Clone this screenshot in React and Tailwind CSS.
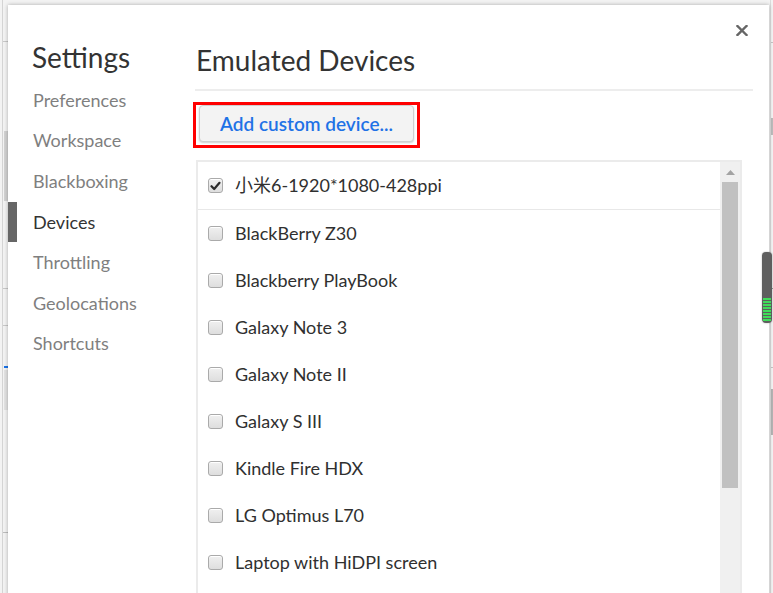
import React from 'react';

const navItems = ['Preferences', 'Workspace', 'Blackboxing', 'Devices', 'Throttling', 'Geolocations', 'Shortcuts'];

const devices = [
  { name: '小米6-1920*1080-428ppi', checked: true },
  { name: 'BlackBerry Z30' },
  { name: 'Blackberry PlayBook' },
  { name: 'Galaxy Note 3' },
  { name: 'Galaxy Note II' },
  { name: 'Galaxy S III' },
  { name: 'Kindle Fire HDX' },
  { name: 'LG Optimus L70' },
  { name: 'Laptop with HiDPI screen' },
];

// little checkbox like the devtools one
const Checkbox = ({ checked }) => (
  <span className="w-[15px] h-[15px] shrink-0 rounded-[3px] border border-[#aaaaaa] bg-gradient-to-b from-[#f0f0f0] to-[#dedede] shadow-[inset_0_1px_0_#fff] flex items-center justify-center">
    {checked && (
      <svg width="11" height="10" viewBox="0 0 11 10">
        <path d="M1.5 5.2 L4.2 8 L9.5 1.8" fill="none" stroke="#2b2b2b" strokeWidth="2.2" strokeLinecap="round" strokeLinejoin="round" />
      </svg>
    )}
  </span>
);

const App = () => {
  return (
    <div className="relative w-[773px] h-[593px] overflow-hidden bg-[#f3f3f3] font-['Lato','Noto_Sans_CJK_SC',sans-serif]">
      {/* page behind the dialog */}
      <div className="flex h-full justify-between">
        <div className="w-[8px] h-full ml-[2px] border-l border-[#d4d4d4] flex flex-col">
          <div className="mt-[41px] h-px bg-[#c8c8c8]" />
          <div className="mt-[89px] h-[70px] ml-px bg-[#d2d2d2]" />
          <div className="mt-[87px] h-px bg-[#c8c8c8]" />
          <div className="mt-[36px] h-px bg-[#c8c8c8]" />
          <div className="mt-[40px] h-[2px] ml-px bg-[#1a73e8]" />
          <div className="mt-[2px] h-[40px] ml-px bg-[#e2e2e2]" />
          <div className="mt-[122px] h-px bg-[#bdbdbd]" />
        </div>
        <div className="w-[3px] h-full border-l border-[#dcdcdc] flex flex-col">
          <div className="mt-[42px] h-px bg-[#c4c4c4]" />
          <div className="mt-[75px] h-[17px] bg-[#bcbcbc]" />
          <div className="mt-[153px] h-px bg-[#9a9a9a]" />
          <div className="mt-[78px] h-px bg-[#c4c4c4]" />
          <div className="mt-[21px] h-[46px] bg-[#b4b4b4]" />
        </div>
      </div>

      {/* dialog */}
      <div className="absolute left-[8px] top-[5px] w-[761px] h-[620px] bg-white shadow-[0_0_4px_rgba(0,0,0,0.3)] flex">
        <aside className="w-[187px] shrink-0 flex flex-col">
          <div className="h-[75px] pt-[36px] pl-[24px] text-[28px] leading-[32px] text-[#333]">Settings</div>
          {navItems.map((item) => (
            <div
              key={item}
              className={
                item === 'Devices'
                  ? 'h-[40.6px] flex items-center border-l-[9px] border-[#666] pl-[16px] text-[18px] text-[#333]'
                  : 'h-[40.6px] flex items-center pl-[25px] text-[18px] text-[#7f7f7f]'
              }
            >
              {item}
            </div>
          ))}
        </aside>

        <main className="flex-1 pr-[16px] flex flex-col min-w-0">
          <div className="pt-[39px] pl-[1px] text-[28px] leading-[32px] text-[#333]">Emulated Devices</div>
          <div className="mt-[13px] h-[2px] bg-[#ededed]" />

          <div className="mt-[11px] ml-[-2px] w-[227px] h-[46px] border-[3px] border-[#ff0000] px-[3px]">
            <button className="w-full h-[37px] rounded-[4px] border border-[#cfcfcf] bg-[#f3f3f3] shadow-[0_1px_2px_rgba(0,0,0,0.2)] text-[19px] font-semibold text-[#1f72e6] leading-none">
              Add custom device...
            </button>
          </div>

          <div className="mt-[12px] ml-[1px] w-[546px] flex-1 border-2 border-[#ebebeb] flex min-h-0">
            <div className="flex-1 flex flex-col overflow-hidden">
              {devices.map((d, i) => (
                <div
                  key={d.name}
                  className={
                    i === 0
                      ? 'h-[48px] shrink-0 flex items-center gap-[12px] pl-[10px] border-b border-[#e8e8e8] text-[18px] text-[#303030]'
                      : 'h-[47px] shrink-0 flex items-center gap-[12px] pl-[10px] text-[18px] text-[#303030]'
                  }
                >
                  <Checkbox checked={d.checked} />
                  <span>{d.name}</span>
                </div>
              ))}
            </div>
            <div className="w-[20px] shrink-0 bg-[#f0f0f0] flex flex-col">
              <div className="h-[20px] flex items-center justify-center">
                <svg width="9" height="5" viewBox="0 0 9 5">
                  <path d="M0 5 L4.5 0 L9 5 Z" fill="#a3a3a3" />
                </svg>
              </div>
              <div className="mx-[2px] h-[306px] bg-[#c1c1c1]" />
            </div>
          </div>
        </main>

        <button className="absolute top-[20px] right-[21px] w-[12px] h-[11px] flex items-center justify-center">
          <svg width="12" height="11" viewBox="0 0 12 11">
            <path d="M1.5 1 L10.5 10 M10.5 1 L1.5 10" stroke="#666" strokeWidth="2.4" strokeLinecap="square" />
          </svg>
        </button>
      </div>

      {/* floating widget on the right edge */}
      <div className="absolute left-[762px] top-[252px] w-[10px] h-[71px] rounded-[4px] bg-[#5e5e5e] shadow-[0_0_2px_rgba(0,0,0,0.3)] flex flex-col justify-end pb-[2px] px-[1px] gap-px">
        {[0, 1, 2, 3, 4, 5, 6, 7].map((n) => (
          <div key={n} className="h-[2px] bg-[#3fdc5a]" />
        ))}
      </div>
    </div>
  );
};

export default App;
